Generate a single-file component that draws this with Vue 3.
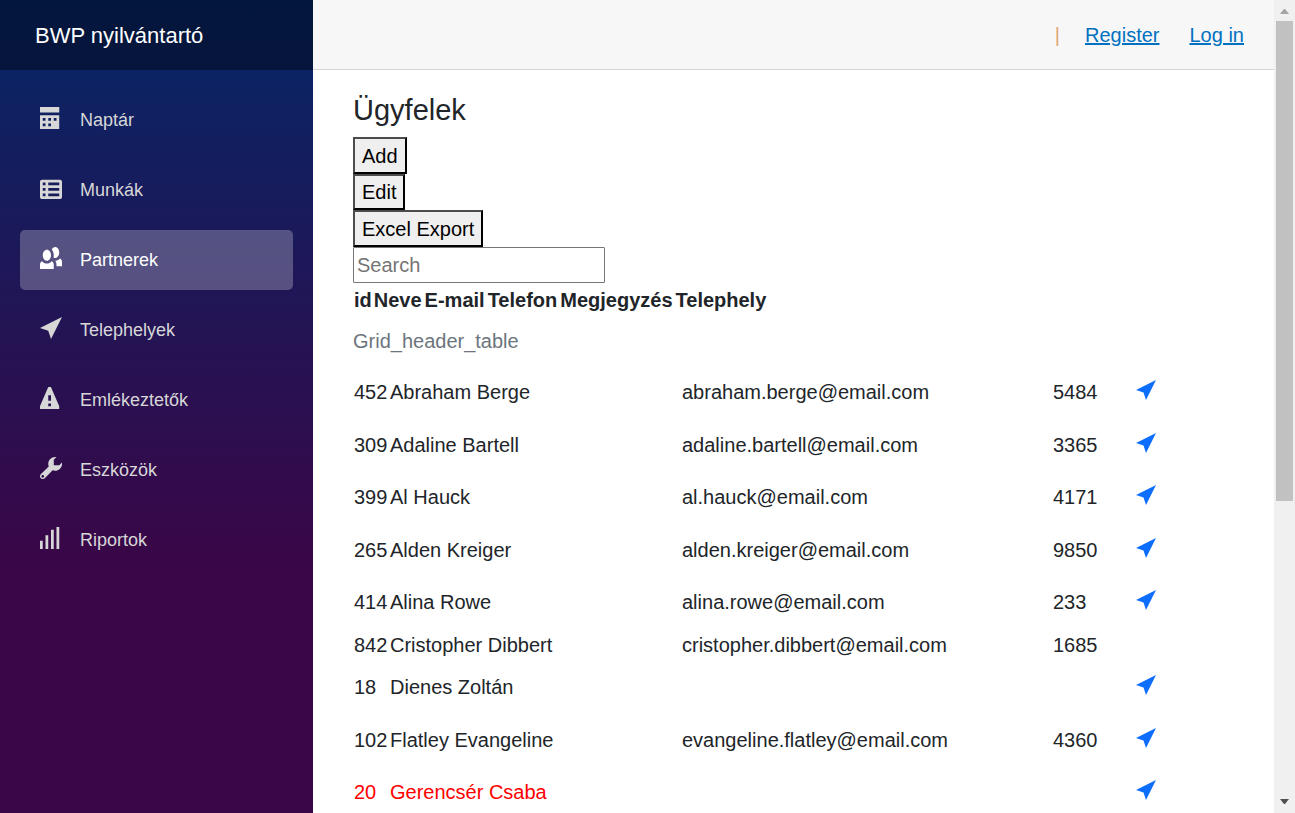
<script setup>
import { ref } from 'vue'

const search = ref('')

const icons = {
  calendar: 'M0 0v2h7v-2h-7zm0 3v4.91c0 .05.04.09.09.09h6.81c.05 0 .09-.04.09-.09v-4.91h-7zm1 1h1v1h-1v-1zm2 0h1v1h-1v-1zm2 0h1v1h-1v-1zm-4 2h1v1h-1v-1zm2 0h1v1h-1v-1z',
  spreadsheet: 'M.75 1c-.41 0-.75.34-.75.75v5.5c0 .41.34.75.75.75h6.5c.41 0 .75-.34.75-.75v-5.5c0-.41-.34-.75-.75-.75h-6.5zm.25 1h1v1h-1v-1zm2 0h4v1h-4v-1zm-2 2h1v1h-1v-1zm2 0h4v1h-4v-1zm-2 2h1v1h-1v-1zm2 0h4v1h-4v-1z',
  people: 'M5.5 0c-.51 0-.95.35-1.22.88.45.54.72 1.275.72 2.125 0 .29-.03.55-.09.81.19.11.38.19.59.19.83 0 1.5-.9 1.5-2s-.67-2-1.5-2zm-3 1c-.828 0-1.5.895-1.5 2s.672 2 1.5 2 1.5-.895 1.5-2-.672-2-1.5-2zm4.75 3.16c-.43.51-1.02.82-1.69.84.27.38.44.84.44 1.34v.66h2v-1.66c0-.52-.31-.97-.75-1.19zm-6.5 1c-.44.22-.75.67-.75 1.19v1.66h5v-1.66c0-.52-.31-.97-.75-1.19-.45.53-1.06.84-1.75.84s-1.3-.32-1.75-.84z',
  location: 'M8 0l-8 4 3 1 1 3 4-8z',
  warning: 'M3.09 0c-.06 0-.1.04-.13.09l-2.94 6.81c-.02.05-.03.13-.03.19v.81c0 .05.04.09.09.09h6.81c.05 0 .09-.04.09-.09v-.81c0-.05-.01-.14-.03-.19l-2.94-6.81c-.02-.05-.07-.09-.13-.09h-.81zm-.09 3h1v2h-1v-2zm0 3h1v1h-1v-1z',
  wrench: 'M5.5 0c-1.38 0-2.5 1.12-2.5 2.5 0 .32.08.62.19.91l-2.91 2.88c-.39.39-.39 1.05 0 1.44.2.2.46.28.72.28.26 0 .52-.09.72-.28l2.88-2.91c.28.11.58.19.91.19 1.38 0 2.5-1.12 2.5-2.5 0-.16 0-.32-.03-.47l-.97.97h-2v-2l.97-.97c-.15-.03-.31-.03-.47-.03zm-4.5 6.5c.28 0 .5.22.5.5s-.22.5-.5.5-.5-.22-.5-.5.22-.5.5-.5z',
  signal: 'M6 0v8h1v-8h-1zm-2 1v7h1v-7h-1zm-2 2v5h1v-5h-1zm-2 2v3h1v-3h-1z'
}

const menu = [
  { label: 'Naptár', icon: 'calendar' },
  { label: 'Munkák', icon: 'spreadsheet' },
  { label: 'Partnerek', icon: 'people', active: true },
  { label: 'Telephelyek', icon: 'location' },
  { label: 'Emlékeztetők', icon: 'warning' },
  { label: 'Eszközök', icon: 'wrench' },
  { label: 'Riportok', icon: 'signal' }
]

const headers = ['id', 'Neve', 'E-mail', 'Telefon', 'Megjegyzés', 'Telephely']

const partners = [
  { id: 452, name: 'Abraham Berge', email: 'abraham.berge@email.com', phone: '5484', site: true },
  { id: 309, name: 'Adaline Bartell', email: 'adaline.bartell@email.com', phone: '3365', site: true },
  { id: 399, name: 'Al Hauck', email: 'al.hauck@email.com', phone: '4171', site: true },
  { id: 265, name: 'Alden Kreiger', email: 'alden.kreiger@email.com', phone: '9850', site: true },
  { id: 414, name: 'Alina Rowe', email: 'alina.rowe@email.com', phone: '233', site: true },
  { id: 842, name: 'Cristopher Dibbert', email: 'cristopher.dibbert@email.com', phone: '1685', site: false },
  { id: 18, name: 'Dienes Zoltán', email: '', phone: '', site: true },
  { id: 102, name: 'Flatley Evangeline', email: 'evangeline.flatley@email.com', phone: '4360', site: true },
  { id: 20, name: 'Gerencsér Csaba', email: '', phone: '', site: true, flagged: true }
]
</script>

<template>
  <div class="page">
    <aside class="sidebar">
      <div class="brand"><a href="#">BWP nyilvántartó</a></div>
      <nav class="menu">
        <a v-for="item in menu" :key="item.label" href="#" class="menu-link" :class="{ active: item.active }">
          <svg class="menu-icon" viewBox="0 0 8 8" aria-hidden="true"><path :d="icons[item.icon]" /></svg>
          <span>{{ item.label }}</span>
        </a>
      </nav>
    </aside>

    <main class="main">
      <header class="top-row">
        <span class="divider">|</span>
        <a href="#">Register</a>
        <a href="#">Log in</a>
      </header>

      <section class="content">
        <h1>Ügyfelek</h1>
        <div class="toolbar">
          <button type="button">Add</button>
          <button type="button">Edit</button>
          <button type="button">Excel Export</button>
          <input v-model="search" type="text" placeholder="Search" aria-label="Search">
        </div>

        <table class="head-table">
          <caption>Grid_header_table</caption>
          <thead>
            <tr><th v-for="h in headers" :key="h" scope="col">{{ h }}</th></tr>
          </thead>
        </table>

        <table class="body-table">
          <colgroup>
            <col class="col-id"><col class="col-name"><col class="col-email"><col class="col-phone"><col class="col-site">
          </colgroup>
          <tbody>
            <tr v-for="p in partners" :key="p.id" :class="{ flagged: p.flagged, plain: !p.site }">
              <td>{{ p.id }}</td>
              <td>{{ p.name }}</td>
              <td>{{ p.email }}</td>
              <td>{{ p.phone }}</td>
              <td>
                <a v-if="p.site" href="#" class="site-link" aria-label="Telephely">
                  <svg viewBox="0 0 8 8" aria-hidden="true"><path :d="icons.location" /></svg>
                </a>
              </td>
            </tr>
          </tbody>
        </table>
      </section>
    </main>

    <div class="scrollbar" aria-hidden="true">
      <svg class="arrow arrow-up" viewBox="0 0 9 5"><path d="M0 5h9L5 0H4z" /></svg>
      <div class="track"><div class="thumb"></div></div>
      <svg class="arrow arrow-down" viewBox="0 0 9 5"><path d="M0 0h9L5 5H4z" /></svg>
    </div>
  </div>
</template>

<style>
body {
  margin: 0;
}
</style>

<style scoped>
.page {
  display: flex;
  height: 100vh;
  overflow: hidden;
  background: #fff;
  color: #212529;
  font: 20px/30px "Liberation Sans", Arial, sans-serif;
}

.page *,
.page *::before {
  box-sizing: border-box;
}

.sidebar {
  flex: 0 0 313px;
  background: linear-gradient(180deg, rgb(5, 39, 103) 0%, #3a0647 70%);
}

.brand {
  display: flex;
  align-items: center;
  height: 70px;
  padding: 1px 0 0 35px;
  background: rgba(0, 0, 0, 0.4);
}

.brand a {
  color: #fff;
  font-size: 22px;
  text-decoration: none;
}

.menu {
  display: flex;
  flex-direction: column;
  gap: 10px;
  padding: 20px;
}

.menu-link {
  display: flex;
  align-items: center;
  gap: 18px;
  height: 60px;
  padding: 0 20px;
  border-radius: 5px;
  color: #d7d7d7;
  font-size: 18px;
  text-decoration: none;
}

.menu-link.active {
  background: rgba(255, 255, 255, 0.25);
  color: #fff;
}

.menu-icon {
  width: 22px;
  height: 22px;
  margin-bottom: 4px;
  fill: currentColor;
}

.main {
  flex: 1;
  min-width: 0;
  overflow: hidden;
}

.top-row {
  display: flex;
  align-items: center;
  justify-content: flex-end;
  height: 70px;
  padding-right: 30px;
  border-bottom: 1px solid #d6d5d5;
  background: #f7f7f7;
}

.top-row a {
  margin-left: 30px;
  color: #0071c1;
}

.top-row .divider {
  margin-right: -5px;
  color: #e0a878;
}

.content {
  padding: 23px 30px 0 40px;
}

h1 {
  margin: 0 0 9px;
  font-size: 29px;
  font-weight: 400;
  line-height: 35px;
}

.toolbar {
  display: grid;
  grid-template-rows: repeat(2, 37px 36px);
  justify-items: start;
  margin-bottom: 1px;
}

.toolbar button,
.toolbar input {
  border-radius: 0;
  font: inherit;
}

.toolbar button {
  padding: 0 7px;
  border: 2px solid;
  border-color: #4c4c4c #000 #000 #4c4c4c;
  background: #efefef;
  color: #000;
}

.toolbar input {
  width: 252px;
  padding: 0 3px;
  border: 1px solid #767676;
  border-radius: 1px;
  background: #fff;
  color: #000;
}

.toolbar input::placeholder {
  color: #757575;
  opacity: 1;
}

table {
  border-collapse: collapse;
}

caption {
  caption-side: bottom;
  padding: 10px 0;
  color: #6c757d;
  text-align: left;
}

th,
td {
  padding: 1px;
  text-align: left;
}

th:nth-child(n + 3) {
  padding-left: 2px;
}

.body-table {
  table-layout: fixed;
  width: 100%;
}

.body-table tr {
  height: 52px;
}

.body-table tr:nth-child(even) {
  height: 53px;
}

.body-table tr.plain {
  height: 33px;
}

.col-id {
  width: 36px;
}

.col-name {
  width: 292px;
}

.col-email {
  width: 371px;
}

.col-phone {
  width: 68px;
}

.flagged {
  color: #f00;
}

.site-link {
  display: block;
  padding: 0 0 4px 15px;
  color: #0d6efd;
}

.site-link svg {
  display: block;
  width: 20px;
  height: 20px;
  fill: currentColor;
}

.scrollbar {
  display: flex;
  flex: 0 0 21px;
  flex-direction: column;
  align-items: center;
  background: #f0f0f0;
}

.arrow {
  width: 9px;
  height: 5px;
}

.arrow-up {
  margin: 9px 0 7px;
  fill: #a3a3a3;
}

.arrow-down {
  margin: 7px 0 9px;
  fill: #505050;
}

.track {
  flex: 1;
  width: 17px;
}

.thumb {
  height: 480px;
  max-height: 100%;
  background: #c1c1c1;
}
</style>
